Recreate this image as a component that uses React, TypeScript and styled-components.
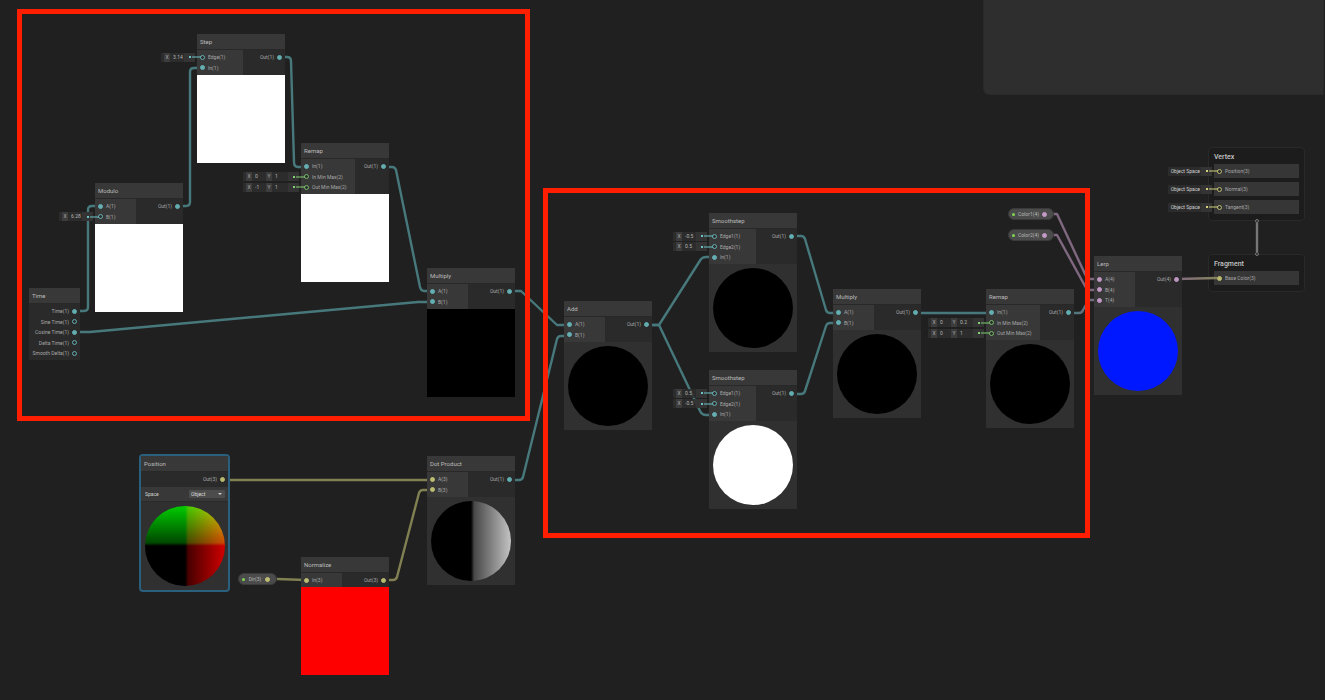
import React from "react";
import styled, { createGlobalStyle } from "styled-components";

const TEAL = "#6cc4c8";
const GREEN = "#7fd070";
const YELLOW = "#d2d27c";
const PINK = "#d9a8dc";

const GlobalStyle = createGlobalStyle`
  *, *::before, *::after { box-sizing: border-box; }
  body { margin: 0; background: #202020; }
`;

const Canvas = styled.main`
  position: relative;
  width: 100%;
  min-height: 100vh;
  overflow: hidden;
  background: #202020;
  color: #a8a8a8;
  font-family: Roboto, "Liberation Sans", sans-serif;
  font-size: 5px;
  line-height: 10px;
`;

const Blackboard = styled.aside`
  position: absolute;
  top: 0;
  right: 1px;
  width: 341px;
  height: 95px;
  background: #2e2e2e;
  border: 1px solid #292929;
  border-top: 0;
  border-radius: 0 0 0 6px;
`;

const Wires = styled.svg`
  position: absolute;
  inset: 0;
  width: 100%;
  height: 100%;
  fill: none;
  stroke-width: 2.4;
  stroke-linejoin: round;
`;

const NodeBox = styled.section<{ $x: number; $y: number; $w: number; $selected?: boolean }>`
  position: absolute;
  left: ${(p) => p.$x}px;
  top: ${(p) => p.$y}px;
  width: ${(p) => p.$w}px;
  background: #303030;
  ${(p) => p.$selected && "border: 2px solid #2a5f7e; border-radius: 4px;"}
`;

const Title = styled.h2`
  margin: 0;
  height: 16px;
  padding: 0 3px;
  background: #383838;
  border-bottom: 1px solid #282828;
  color: #bcbcbc;
  font-size: 6px;
  font-weight: 400;
  line-height: 16px;
  white-space: nowrap;
`;

const Ports = styled.div`
  display: flex;
  background: #2a2a2a;
`;

const PortColumn = styled.div<{ $w?: number; $out?: boolean }>`
  display: grid;
  grid-auto-rows: 10px 11px;
  padding: 2px 3px;
  ${(p) => (p.$w ? `width: ${p.$w}px;` : "flex: 1;")}
  background: ${(p) => (p.$out ? "#2a2a2a" : "#383838")};
`;

const PortRow = styled.div<{ $out?: boolean }>`
  position: relative;
  display: flex;
  flex-direction: ${(p) => (p.$out ? "row-reverse" : "row")};
  align-items: center;
  gap: 3px;
  white-space: nowrap;
`;

const Dot = styled.i<{ $color: string; $open?: boolean }>`
  flex: none;
  width: 5px;
  height: 5px;
  border-radius: 50%;
  border: 1px solid ${(p) => p.$color};
  background: ${(p) => (p.$open ? "#2c2c2c" : p.$color)};
  opacity: 0.85;
`;

const Chip = styled.div`
  position: absolute;
  right: calc(100% + 5px);
  display: flex;
  align-items: center;
  height: 9px;
  padding-left: 3px;
  background: #2d2d2de0;
  line-height: 9px;
`;

const Field = styled.label`
  display: flex;
  align-items: center;
`;

const Axis = styled.span`
  width: 6px;
  background: #3c3c3c;
  text-align: center;
`;

const Value = styled.input<{ $w: number }>`
  width: ${(p) => p.$w}px;
  height: 7px;
  margin: 0;
  padding: 0 0 0 3px;
  border: 0;
  background: transparent;
  color: #b4b4b4;
  font: inherit;
`;

const Slot = styled.span<{ $color: string }>`
  position: relative;
  display: flex;
  align-items: center;
  width: 11px;
  height: 9px;
  padding-left: 5px;
  background: #343434;
  color: ${(p) => p.$color};

  &::before {
    content: "";
    width: 2px;
    height: 2px;
    background: currentColor;
  }
  &::after {
    content: "";
    position: absolute;
    left: 8px;
    width: 9px;
    height: 2px;
    background: currentColor;
    opacity: 0.5;
  }
`;

const Square = styled.div<{ $fill: string }>`
  height: 88px;
  background: ${(p) => p.$fill};
`;

const SphereFrame = styled.div`
  display: grid;
  place-items: center;
  height: 88px;
`;

const Sphere = styled.div<{ $fill: string }>`
  width: 80px;
  height: 80px;
  border-radius: 50%;
  background: ${(p) => p.$fill};
  background-blend-mode: screen;
`;

const OptionRow = styled.label`
  display: flex;
  align-items: center;
  justify-content: space-between;
  height: 16px;
  padding: 0 3px 0 4px;
  background: #383838;
  border: solid #2a2a2a;
  border-width: 1px 0;
  color: #d0d0d0;
`;

const SelectWrap = styled.span`
  position: relative;
  display: flex;
  width: 36px;

  &::after {
    content: "";
    position: absolute;
    right: 3px;
    top: 3px;
    border: 2px solid transparent;
    border-top-color: #cccccc;
  }
`;

const Select = styled.select`
  appearance: none;
  width: 100%;
  height: 8px;
  padding: 0 2px;
  border: 0;
  border-radius: 1px;
  background: #4c4c4c;
  color: #dddddd;
  font: inherit;
  line-height: 8px;
`;

const Pill = styled.div<{ $x: number; $y: number; $w: number }>`
  position: absolute;
  left: ${(p) => p.$x}px;
  top: ${(p) => p.$y}px;
  width: ${(p) => p.$w}px;
  height: 12px;
  display: flex;
  align-items: center;
  justify-content: space-between;
  padding: 0 6px 0 3px;
  border: 1px solid #3a3a3a;
  border-radius: 6px;
  background: #4b4b4b;
  color: #b8b8b8;
`;

const PillDot = styled.i`
  width: 3px;
  height: 3px;
  border-radius: 50%;
  background: #80d850;
`;

const Stage = styled.section<{ $y: number }>`
  position: absolute;
  left: 1208px;
  top: ${(p) => p.$y}px;
  width: 97px;
  padding: 3px 5px 6px;
  display: flex;
  flex-direction: column;
  gap: 4px;
  border: 1px solid #292929;
  border-radius: 4px;
  background: #1c1c1c;
`;

const StageTitle = styled.h2`
  margin: 0;
  height: 9px;
  color: #c4c4c4;
  font-size: 7px;
  font-weight: 500;
  line-height: 12px;
`;

const StageRow = styled.div`
  position: relative;
  display: flex;
  align-items: center;
  gap: 3px;
  height: 14px;
  padding-left: 3px;
  background: #363636;
  white-space: nowrap;
`;

const SpaceChip = styled(Chip)`
  right: calc(100% + 2px);
  color: #d0d0d0;
  gap: 1px;
`;

const Highlight = styled.div<{ $x: number; $y: number; $w: number; $h: number }>`
  position: absolute;
  left: ${(p) => p.$x}px;
  top: ${(p) => p.$y}px;
  width: ${(p) => p.$w}px;
  height: ${(p) => p.$h}px;
  border: 5px solid #ff1e00;
  pointer-events: none;
`;

type Input = { label: string; color?: string; values?: string[] };
type Output = { label: string; color?: string; open?: boolean };
type GraphNode = {
  title: string;
  x: number;
  y: number;
  w?: number;
  inputWidth?: number;
  inputs?: Input[];
  outputs: Output[];
  square?: string;
  sphere?: string;
  option?: boolean;
};

const positionFill =
  "linear-gradient(to right, #000 50%, #480000 54%, #d00000 100%), linear-gradient(to top, #000 50%, #004800 54%, #00cc00 100%)";
const dotFill = "linear-gradient(to right, #000 50%, #484848 54%, #c4c4c4 100%)";

const nodes: GraphNode[] = [
  {
    title: "Step", x: 197, y: 34, inputWidth: 46, square: "#fff",
    inputs: [{ label: "Edge(1)", values: ["3.14"] }, { label: "In(1)" }],
    outputs: [{ label: "Out(1)" }],
  },
  {
    title: "Modulo", x: 95, y: 183, inputWidth: 41, square: "#fff",
    inputs: [{ label: "A(1)" }, { label: "B(1)", values: ["6.28"] }],
    outputs: [{ label: "Out(1)" }],
  },
  {
    title: "Remap", x: 301, y: 143, inputWidth: 54, square: "#fff",
    inputs: [
      { label: "In(1)" },
      { label: "In Min Max(2)", color: GREEN, values: ["0", "1"] },
      { label: "Out Min Max(2)", color: GREEN, values: ["-1", "1"] },
    ],
    outputs: [{ label: "Out(1)" }],
  },
  {
    title: "Time", x: 29, y: 288, w: 51,
    outputs: [
      { label: "Time(1)" },
      { label: "Sine Time(1)", open: true },
      { label: "Cosine Time(1)" },
      { label: "Delta Time(1)", open: true },
      { label: "Smooth Delta(1)", open: true },
    ],
  },
  {
    title: "Multiply", x: 427, y: 268, inputWidth: 41, square: "#000",
    inputs: [{ label: "A(1)" }, { label: "B(1)" }],
    outputs: [{ label: "Out(1)" }],
  },
  {
    title: "Add", x: 564, y: 301, inputWidth: 41, sphere: "#000",
    inputs: [{ label: "A(1)" }, { label: "B(1)" }],
    outputs: [{ label: "Out(1)" }],
  },
  {
    title: "Smoothstep", x: 709, y: 213, inputWidth: 47, sphere: "#000",
    inputs: [
      { label: "Edge1(1)", values: ["-0.5"] },
      { label: "Edge2(1)", values: ["0.5"] },
      { label: "In(1)" },
    ],
    outputs: [{ label: "Out(1)" }],
  },
  {
    title: "Smoothstep", x: 709, y: 370, inputWidth: 47, sphere: "#fff",
    inputs: [
      { label: "Edge1(1)", values: ["0.5"] },
      { label: "Edge2(1)", values: ["-0.5"] },
      { label: "In(1)" },
    ],
    outputs: [{ label: "Out(1)" }],
  },
  {
    title: "Multiply", x: 833, y: 289, inputWidth: 41, sphere: "#000",
    inputs: [{ label: "A(1)" }, { label: "B(1)" }],
    outputs: [{ label: "Out(1)" }],
  },
  {
    title: "Remap", x: 986, y: 289, inputWidth: 54, sphere: "#000",
    inputs: [
      { label: "In(1)" },
      { label: "In Min Max(2)", color: GREEN, values: ["0", "0.2"] },
      { label: "Out Min Max(2)", color: GREEN, values: ["0", "1"] },
    ],
    outputs: [{ label: "Out(1)" }],
  },
  {
    title: "Lerp", x: 1094, y: 256, inputWidth: 41, sphere: "#0018ff",
    inputs: [
      { label: "A(4)", color: PINK },
      { label: "B(4)", color: PINK },
      { label: "T(4)", color: PINK },
    ],
    outputs: [{ label: "Out(4)", color: PINK }],
  },
  {
    title: "Position", x: 139, y: 454, w: 91, sphere: positionFill, option: true,
    outputs: [{ label: "Out(3)", color: YELLOW }],
  },
  {
    title: "Normalize", x: 301, y: 557, inputWidth: 41, square: "#f00",
    inputs: [{ label: "In(3)", color: YELLOW }],
    outputs: [{ label: "Out(3)", color: YELLOW }],
  },
  {
    title: "Dot Product", x: 427, y: 456, inputWidth: 41, sphere: dotFill,
    inputs: [{ label: "A(3)", color: YELLOW }, { label: "B(3)", color: YELLOW }],
    outputs: [{ label: "Out(1)" }],
  },
];

const tealWires = [
  "M75 311H84Q88 311 88 307V210Q88 206 92 206H100",
  "M75 332H90L418 302H432",
  "M178 206H186Q190 206 190 202V72Q190 68 194 68H202",
  "M280 57H287Q291 57 291 61L294 162Q294 167 298 167H306",
  "M384 167H392Q395 167 396 170L420 287Q421 291 424 291H432",
  "M510 291H521L557 325H569",
  "M510 480H519Q522 480 523 477L557 339Q558 336 561 336H569",
  "M647 325H659L701 259Q703 257 706 257H714",
  "M647 325H659L700 411Q702 415 706 415H714",
  "M792 236H801Q804 236 805 239L826 310Q827 313 830 313H838",
  "M792 394H801Q804 394 805 391L826 326Q827 323 830 323H838",
  "M916 313H991",
];

const yellowWires = [
  "M223 480H432",
  "M277 579L306 580",
  "M383 580H393Q396 580 397 577L419 493Q420 490 423 490H432",
];

const pinkWires = [
  "M1053 214H1057L1085 274Q1087 279 1091 279H1099",
  "M1053 235H1057L1085 286Q1087 290 1091 290H1099",
];

const axes = ["X", "Y"];

function ValueChip({ port, values, color }: { port: string; values: string[]; color: string }) {
  return (
    <Chip>
      {values.map((value, i) => (
        <Field key={axes[i]}>
          <Axis>{axes[i]}</Axis>
          <Value $w={i === 0 ? 14 : 16} defaultValue={value} aria-label={`${port} ${axes[i]}`} />
        </Field>
      ))}
      <Slot $color={color} />
    </Chip>
  );
}

function NodeView({ node }: { node: GraphNode }) {
  return (
    <NodeBox $x={node.x} $y={node.y} $w={node.w ?? 88} $selected={node.option}>
      <Title>{node.title}</Title>
      <Ports>
        {node.inputs && (
          <PortColumn $w={node.inputWidth}>
            {node.inputs.map((p) => (
              <PortRow key={p.label}>
                <Dot $color={p.color ?? TEAL} $open={!!p.values} />
                <span>{p.label}</span>
                {p.values && <ValueChip port={p.label} values={p.values} color={p.color ?? TEAL} />}
              </PortRow>
            ))}
          </PortColumn>
        )}
        <PortColumn $out>
          {node.outputs.map((p) => (
            <PortRow key={p.label} $out>
              <Dot $color={p.color ?? TEAL} $open={p.open} />
              <span>{p.label}</span>
            </PortRow>
          ))}
        </PortColumn>
      </Ports>
      {node.option && (
        <OptionRow>
          Space
          <SelectWrap>
            <Select defaultValue="Object">
              <option>Object</option>
              <option>World</option>
            </Select>
          </SelectWrap>
        </OptionRow>
      )}
      {node.square && <Square $fill={node.square} />}
      {node.sphere && (
        <SphereFrame>
          <Sphere $fill={node.sphere} />
        </SphereFrame>
      )}
    </NodeBox>
  );
}

export default function App() {
  return (
    <>
      <GlobalStyle />
      <Canvas>
        <Blackboard />
        {["Vertex", "Fragment"].map((stage) => (
          <Stage key={stage} $y={stage === "Vertex" ? 147 : 254}>
            <StageTitle>{stage}</StageTitle>
            {stage === "Vertex" ? (
              ["Position(3)", "Normal(3)", "Tangent(3)"].map((label) => (
                <StageRow key={label}>
                  <Dot $color={YELLOW} $open />
                  <span>{label}</span>
                  <SpaceChip>
                    Object Space
                    <Slot $color={YELLOW} />
                  </SpaceChip>
                </StageRow>
              ))
            ) : (
              <StageRow>
                <Dot $color={YELLOW} />
                <span>Base Color(3)</span>
              </StageRow>
            )}
          </Stage>
        ))}
        <Wires aria-hidden="true">
          <defs>
            <linearGradient id="toYellow" gradientUnits="userSpaceOnUse" x1="1177" y1="0" x2="1220" y2="0">
              <stop offset="0" stopColor="#806880" />
              <stop offset="1" stopColor="#85855a" />
            </linearGradient>
            <linearGradient id="toPink" gradientUnits="userSpaceOnUse" x1="1070" y1="0" x2="1100" y2="0">
              <stop offset="0" stopColor="#47797c" />
              <stop offset="1" stopColor="#806880" />
            </linearGradient>
          </defs>
          <g stroke="#47797c">{tealWires.map((d) => <path key={d} d={d} />)}</g>
          <g stroke="#808052">{yellowWires.map((d) => <path key={d} d={d} />)}</g>
          <g stroke="#806880">{pinkWires.map((d) => <path key={d} d={d} />)}</g>
          <path stroke="url(#toPink)" d="M1069 313H1079Q1082 313 1083 310L1087 303Q1088 300 1091 300H1099" />
          <path stroke="url(#toYellow)" d="M1177 279L1217 278" />
          <g stroke="#777777">
            <path d="M1257 223V252" />
            <circle cx="1257" cy="221" r="1.5" strokeWidth="1" />
            <circle cx="1257" cy="254" r="1.5" strokeWidth="1" />
          </g>
        </Wires>
        {nodes.map((node) => (
          <NodeView key={`${node.x}-${node.y}`} node={node} />
        ))}
        <Pill $x={238} $y={573} $w={39}>
          <PillDot />
          Dir(3)
          <Dot $color={YELLOW} />
        </Pill>
        <Pill $x={1008} $y={208} $w={46}>
          <PillDot />
          Color1(4)
          <Dot $color={PINK} />
        </Pill>
        <Pill $x={1008} $y={229} $w={46}>
          <PillDot />
          Color2(4)
          <Dot $color={PINK} />
        </Pill>
        <Highlight $x={17} $y={9} $w={513} $h={412} />
        <Highlight $x={543} $y={188} $w={547} $h={350} />
      </Canvas>
    </>
  );
}
